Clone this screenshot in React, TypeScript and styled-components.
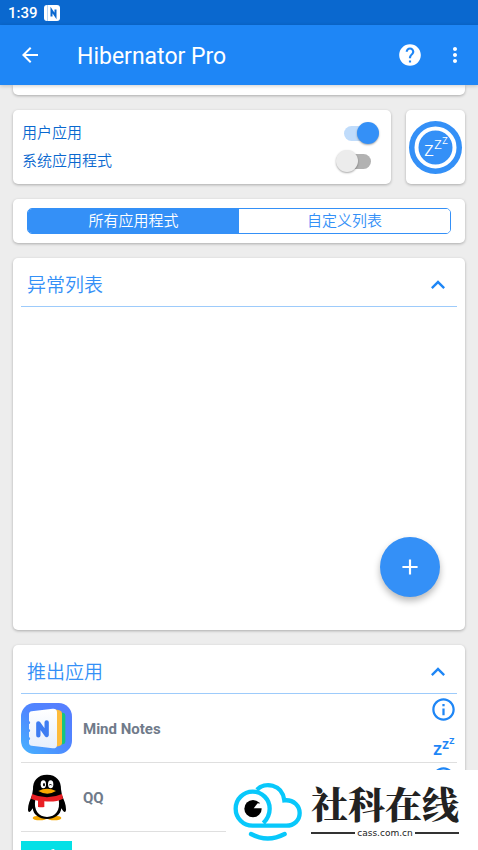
import React, { useState } from "react";
import styled, { createGlobalStyle } from "styled-components";
import {
  MdAdd,
  MdArrowBack,
  MdExpandLess,
  MdHelp,
  MdInfoOutline,
  MdMoreVert,
} from "react-icons/md";

const blue = "#3490f7";
const strongBlue = "#1e86f6";
const deepBlue = "#0a68cf";

const GlobalStyle = createGlobalStyle`
  *, *::before, *::after { box-sizing: border-box; }
  body {
    margin: 0;
    background: #ededed;
    font-family: Roboto, "Noto Sans CJK SC", sans-serif;
  }
  button {
    font: inherit;
    border: 0;
    padding: 0;
    background: none;
    color: inherit;
    cursor: pointer;
  }
  svg { display: block; }
`;

const Screen = styled.div`
  height: 100vh;
  display: flex;
  flex-direction: column;
  overflow: hidden;
`;

const StatusBar = styled.div`
  flex: none;
  display: flex;
  align-items: center;
  gap: 6px;
  height: 25px;
  padding: 1px 8px 0;
  background: ${deepBlue};
  color: #fff;
  font-size: 15px;
  font-weight: 500;
`;

const AppBar = styled.header`
  flex: none;
  display: flex;
  align-items: center;
  height: 60px;
  padding: 0 11px 0 18px;
  background: ${strongBlue};
  color: #fff;
  box-shadow: 0 1px 4px rgba(0, 0, 0, 0.2);
  z-index: 1;
`;

const AppTitle = styled.h1`
  flex: 1;
  margin: 0 0 0 35px;
  padding-top: 4px;
  font-size: 23px;
  line-height: 28px;
  font-weight: 400;
`;

const BarActions = styled.div`
  display: flex;
  align-items: center;
  gap: 20px;
`;

const IconButton = styled.button`
  display: grid;
  place-items: center;
`;

const Content = styled.main`
  flex: 1;
  min-height: 0;
  overflow: hidden;
  padding: 0 13px;
  display: flex;
  flex-direction: column;
  gap: 15px;
`;

const Card = styled.section`
  flex: none;
  background: #fff;
  border-radius: 5px;
  box-shadow: 0 1px 3px rgba(0, 0, 0, 0.28);
`;

const CardTail = styled(Card)`
  height: 10px;
  border-radius: 0 0 5px 5px;
`;

const FilterRow = styled.div`
  flex: none;
  display: flex;
  gap: 15px;
`;

const FilterCard = styled(Card)`
  flex: 1;
  padding: 9px 12px 9px 9px;
  height: 74px;
`;

const FilterLabel = styled.label`
  display: flex;
  align-items: center;
  justify-content: space-between;
  height: 28px;
  color: ${deepBlue};
  font-size: 15px;
  line-height: 22px;
  font-weight: 350;
`;

const Switch = styled.input`
  appearance: none;
  position: relative;
  width: 43px;
  height: 22px;
  margin: 0;
  cursor: pointer;

  &::before {
    content: "";
    position: absolute;
    inset: 4px 8px 3px 8px;
    border-radius: 8px;
    background: #b2b2b2;
  }

  &::after {
    content: "";
    position: absolute;
    top: 0;
    left: 0;
    width: 22px;
    height: 22px;
    border-radius: 50%;
    background: #ececec;
    box-shadow: 0 1px 2px rgba(0, 0, 0, 0.35);
  }

  &:checked::before { background: #c0dcfb; }
  &:checked::after { left: auto; right: 0; background: ${blue}; }
`;

const SleepCard = styled(Card)`
  display: grid;
  place-items: center;
  width: 59px;
`;

const TabsCard = styled(Card)`
  padding: 9px 14px;
`;

const Segments = styled.div`
  display: flex;
  height: 26px;
  border: 1px solid ${blue};
  border-radius: 5px;
  overflow: hidden;
`;

const Segment = styled.button<{ $active: boolean }>`
  flex: 1;
  font-size: 15px;
  line-height: 24px;
  font-weight: 350;
  background: ${(p) => (p.$active ? blue : "#fff")};
  color: ${(p) => (p.$active ? "#fff" : blue)};
`;

const ListCard = styled(Card)`
  padding: 0 8px;
`;

const ExceptionCard = styled(ListCard)`
  display: flex;
  flex-direction: column;
  height: 372px;
`;

const ListHeader = styled.div`
  display: flex;
  align-items: center;
  justify-content: space-between;
  height: 49px;
  padding: 6px 5px 0 6px;
  border-bottom: 1px solid #9dcbfb;
  color: ${strongBlue};
`;

const ListTitle = styled.h2`
  margin: 0;
  padding-top: 2px;
  color: ${blue};
  font-size: 19px;
  line-height: 28px;
  font-weight: 350;
`;

const AddButton = styled.button`
  display: grid;
  place-items: center;
  width: 60px;
  height: 60px;
  margin: auto 17px 33px auto;
  border-radius: 50%;
  background: ${blue};
  color: #fff;
  box-shadow: 0 4px 7px rgba(0, 0, 0, 0.28);
`;

const AppList = styled.ul`
  list-style: none;
  margin: 0;
  padding: 0;
`;

const AppRow = styled.li`
  display: flex;
  align-items: center;
  gap: 11px;
  height: 69px;
  border-bottom: 1px solid #dfdfdf;
`;

const AppName = styled.span`
  flex: 1;
  padding-top: 2px;
  color: #707b8a;
  font-size: 15px;
  font-weight: 700;
`;

const RowActions = styled.div`
  display: flex;
  flex-direction: column;
  align-items: center;
  justify-content: space-between;
  align-self: stretch;
  padding: 2px 0 5px;
  color: ${strongBlue};
`;

const Watermark = styled.aside`
  position: fixed;
  right: 0;
  bottom: 0;
  z-index: 2;
  display: flex;
  align-items: center;
  gap: 8px;
  height: 80px;
  padding: 4px 19px 0 7px;
  background: #fff;
  color: #222;
`;

const BrandText = styled.div`
  display: flex;
  flex-direction: column;
  padding-bottom: 6px;
`;

const BrandName = styled.strong`
  font-family: "Noto Serif CJK SC", "Noto Sans CJK SC", serif;
  font-size: 37px;
  line-height: 48px;
  font-weight: 900;
`;

const BrandSite = styled.span`
  display: flex;
  align-items: center;
  gap: 2px;
  font-family: "DejaVu Sans", sans-serif;
  font-size: 9px;
  line-height: 12px;

  &::before,
  &::after {
    content: "";
    flex: 1;
    height: 2px;
    background: #333;
  }
`;

function NoteBadge() {
  return (
    <svg width="16" height="16" viewBox="0 0 16 16" aria-hidden="true">
      <rect width="16" height="16" rx="3" fill="#fff" />
      <path d="M3.5 0v16" stroke="#b9d6f5" />
      <path d="M7.5 11.5V5l4 6V4.5" fill="none" stroke={deepBlue} strokeWidth="2" />
    </svg>
  );
}

const SleepSvg = styled.svg`
  overflow: visible;
  font-family: Roboto, sans-serif;
`;

function SleepMark() {
  return (
    <SleepSvg width="22" height="22" viewBox="0 0 22 22" fill="currentColor" fontWeight="500" aria-hidden="true">
      <text>
        <tspan x="0" y="20" fontSize="18">z</tspan>
        <tspan x="9" y="14" fontSize="14">z</tspan>
        <tspan x="16" y="9" fontSize="11">z</tspan>
      </text>
    </SleepSvg>
  );
}

function SleepDial() {
  return (
    <SleepSvg width="53" height="53" viewBox="0 0 53 53" fill="#fff" aria-hidden="true">
      <circle cx="26.5" cy="26.5" r="26.5" fill={blue} />
      <circle cx="26.5" cy="26.5" r="19" fill="none" stroke="#fff" strokeWidth="4" />
      <text fontWeight="300">
        <tspan x="15" y="35" fontSize="20">z</tspan>
        <tspan x="25" y="28" fontSize="16">z</tspan>
        <tspan x="33" y="23" fontSize="12">z</tspan>
      </text>
    </SleepSvg>
  );
}

function MindNotesIcon() {
  return (
    <svg width="51" height="51" viewBox="0 0 153 153" aria-hidden="true">
      <defs>
        <linearGradient id="noteBack" x1="0" y1="1" x2="0.8" y2="0.1">
          <stop offset="0" stopColor="#46b3ff" />
          <stop offset="0.6" stopColor="#4f86ff" />
          <stop offset="1" stopColor="#557fff" />
        </linearGradient>
        <linearGradient id="notePage" x1="0" y1="0" x2="0" y2="1">
          <stop offset="0" stopColor="#fff" />
          <stop offset="1" stopColor="#e6effc" />
        </linearGradient>
      </defs>
      <rect width="153" height="153" rx="40" fill="url(#noteBack)" />
      <path d="M110 27l16 2q7 1 7 8v79q0 7-7 8l-16 3z" fill="#17c47f" />
      <path d="M100 19l15 3q8 2 8 9v90q0 7-8 8l-15 3z" fill="#fdbb3b" />
      <path
        d="M32 25l63-8q13-1 13 11v98q0 11-13 10l-63-8q-8-1-8-9v-7q7-5 0-10V88q7-5 0-10V64q7-5 0-10V34q0-8 8-9z"
        fill="url(#notePage)"
      />
      <path d="M52 97V61L77 96V58" fill="none" stroke="#3e7df2" strokeWidth="13" strokeLinecap="round" strokeLinejoin="round" />
    </svg>
  );
}

function PenguinIcon() {
  return (
    <svg width="51" height="51" viewBox="0 0 153 153" aria-hidden="true">
      <ellipse cx="56" cy="138" rx="21" ry="7" fill="#f5a700" />
      <ellipse cx="100" cy="138" rx="21" ry="7" fill="#f5a700" />
      <path
        d="M78 8c-28 0-43 19-42 44l-3 18c-6 15-12 28-12 42 0 12 7 10 14-3 2 20 20 32 43 32s41-12 43-32c7 13 14 15 14 3 0-14-6-27-12-42l-3-18C121 27 106 8 78 8z"
        fill="#000"
      />
      <path d="M43 82c-6 34 10 53 35 53s41-19 35-53z" fill="#fff" />
      <ellipse cx="67" cy="37" rx="8" ry="12" fill="#fff" />
      <ellipse cx="89" cy="37" rx="8" ry="12" fill="#fff" />
      <ellipse cx="69" cy="38" rx="3" ry="5" />
      <path d="M85 40q3-8 7 0" fill="none" stroke="#000" strokeWidth="3" />
      <path d="M52 57q26-14 53 0-26 16-53 0z" fill="#f9a800" />
      <path d="M33 66q45 20 90 0l3 14q-20 11-56 8v17q-9 2-19 0V86q-12-2-21-6z" fill="#e91f24" />
    </svg>
  );
}

function CyanIcon() {
  return (
    <svg width="51" height="51" viewBox="0 0 51 51" aria-hidden="true">
      <rect width="51" height="51" fill="#04e0e6" />
      <path d="M27 13q2-5 6-5l2 3q-3 4-4 9z" fill="#fff" />
    </svg>
  );
}

function CloudEyeLogo() {
  return (
    <svg width="70" height="60" viewBox="39 52 210 180" aria-hidden="true">
      <g fill="none" stroke="#08c8fb" strokeWidth="13">
        <path d="M111 75C133 51 187 57 193 107C222 104 239 125 239 145C239 167 222 183 199 183H98A51 51 0 1 1 149 132Q149 156 130 175" />
        <path d="M93 208Q143 235 194 208" strokeLinecap="round" />
      </g>
      <circle cx="99" cy="132" r="26" fill="#000" />
      <path d="M101 131l12-15 16 2-3 13z" fill="#fff" />
    </svg>
  );
}

const apps = [
  { name: "Mind Notes", icon: <MindNotesIcon /> },
  { name: "QQ", icon: <PenguinIcon /> },
  { name: "", icon: <CyanIcon /> },
];

export default function App() {
  const [userApps, setUserApps] = useState(true);
  const [systemApps, setSystemApps] = useState(false);
  const [tab, setTab] = useState(0);

  return (
    <>
      <GlobalStyle />
      <Screen>
        <StatusBar>
          <span>1:39</span>
          <NoteBadge />
        </StatusBar>
        <AppBar>
          <IconButton aria-label="Back"><MdArrowBack size={24} /></IconButton>
          <AppTitle>Hibernator Pro</AppTitle>
          <BarActions>
            <IconButton aria-label="Help"><MdHelp size={26} /></IconButton>
            <IconButton aria-label="More"><MdMoreVert size={24} /></IconButton>
          </BarActions>
        </AppBar>
        <Content>
          <CardTail />
          <FilterRow>
            <FilterCard>
              <FilterLabel>
                用户应用
                <Switch type="checkbox" checked={userApps} onChange={(e) => setUserApps(e.target.checked)} />
              </FilterLabel>
              <FilterLabel>
                系统应用程式
                <Switch type="checkbox" checked={systemApps} onChange={(e) => setSystemApps(e.target.checked)} />
              </FilterLabel>
            </FilterCard>
            <SleepCard>
              <IconButton aria-label="Hibernate"><SleepDial /></IconButton>
            </SleepCard>
          </FilterRow>
          <TabsCard>
            <Segments>
              {["所有应用程式", "自定义列表"].map((label, i) => (
                <Segment key={label} $active={tab === i} aria-pressed={tab === i} onClick={() => setTab(i)}>
                  {label}
                </Segment>
              ))}
            </Segments>
          </TabsCard>
          <ExceptionCard>
            <ListHeader>
              <ListTitle>异常列表</ListTitle>
              <IconButton aria-label="Collapse"><MdExpandLess size={28} /></IconButton>
            </ListHeader>
            <AddButton aria-label="Add"><MdAdd size={26} /></AddButton>
          </ExceptionCard>
          <ListCard>
            <ListHeader>
              <ListTitle>推出应用</ListTitle>
              <IconButton aria-label="Collapse"><MdExpandLess size={28} /></IconButton>
            </ListHeader>
            <AppList>
              {apps.map((app, i) => (
                <AppRow key={i}>
                  {app.icon}
                  <AppName>{app.name}</AppName>
                  <RowActions>
                    <IconButton aria-label="App info"><MdInfoOutline size={27} /></IconButton>
                    <IconButton aria-label="Hibernate app"><SleepMark /></IconButton>
                  </RowActions>
                </AppRow>
              ))}
            </AppList>
          </ListCard>
        </Content>
        <Watermark>
          <CloudEyeLogo />
          <BrandText>
            <BrandName>社科在线</BrandName>
            <BrandSite>cass.com.cn</BrandSite>
          </BrandText>
        </Watermark>
      </Screen>
    </>
  );
}
